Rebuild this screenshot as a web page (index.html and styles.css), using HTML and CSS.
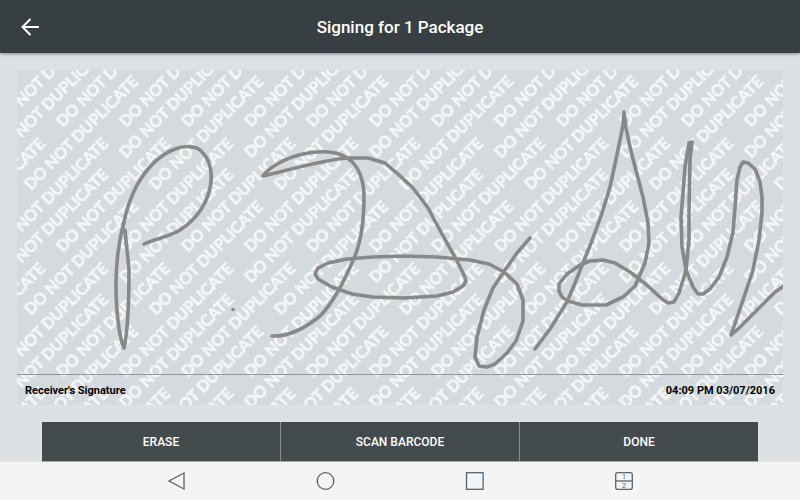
FILE: index.html
```
<!DOCTYPE html>
<html lang="en">
<head>
    <meta charset="UTF-8">
    <meta name="viewport" content="width=device-width, initial-scale=1.0">
    <title>Signing for 1 Package</title>
    <link rel="stylesheet" href="styles.css">
</head>
<body>
    <header class="header">
        <button class="back-btn" aria-label="Back">
            <svg width="18" height="18" viewBox="0 0 18 18">
                <path d="M9.5 1L1.5 9L9.5 17M1.5 9H18"/>
            </svg>
        </button>
        <h1 class="title">Signing for 1 Package</h1>
    </header>

    <main class="main-content">
        <section class="signature-pad">
            <!-- Repeating watermark -->
            <svg class="watermark" aria-hidden="true">
                <defs>
                    <g id="marks">
                        <text transform="translate(14 121) rotate(-45)">DO NOT DUPLICATE</text>
                        <text transform="translate(46 58) rotate(-45)">DO NOT DUPLICATE</text>
                        <text transform="translate(109 58) rotate(-45)">DO NOT DUPLICATE</text>
                        <text transform="translate(109 89) rotate(-45)">DO NOT DUPLICATE</text>
                    </g>
                    <pattern id="tile" width="125" height="125" patternUnits="userSpaceOnUse">
                        <use href="#marks" x="-125" y="0"/>
                        <use href="#marks" x="0" y="0"/>
                        <use href="#marks" x="-125" y="125"/>
                        <use href="#marks" x="0" y="125"/>
                    </pattern>
                </defs>
                <rect width="100%" height="100%" fill="url(#tile)"/>
            </svg>
            <!-- Captured strokes -->
            <svg class="strokes" viewBox="0 0 766 335" role="img" aria-label="Signature">
                <path d="M108 160C109 173 111 188 112 200C112 235 111 260 107 278C103 270 99 245 99 215C99 190 102 170 107 152C110 137 114 127 119 117C131 95 145 84 158 79C168 75 179 76 184 81C192 88 195 100 194 112C192 132 179 150 163 160C152 167 137 169 127 174"/>
                <path d="M216 239.5H216.1"/>
                <path d="M255 266C275 267 292 255 303 246C317 232 330 205 338 186C345 168 347 147 347 127C347 111 342 95 330 88C319 80 300 81 286 84C268 88 251 98 246 106C268 101 305 90 330 88L351 88L368 93L381 104L396 118L411 138L425 164L439 189L447 205L449 211L446 216L436 222L420 226L386 228L356 227L335 224L315 217L301 209L298 204L301 198L311 193L330 189L356 187L386 186L420 187L453 190L472 194L487 202L500 214L506 230L506 251L499 271L490 283L478 294L470 297L462 296L458 287L460 267L467 240L476 218L488 200L500 183L513 168"/>
                <path d="M518 279L533 259L550 232L558 213L566 193L576 168L585 143L593 117L601 80L606 55L607 42L609 58L613 77L617 93L626 127L631 153L632 173L628 193L618 216L606 227L589 235L565 235L551 231L545 227L542 221L542 214L550 204L563 195L573 191L586 190L598 193L613 202L631 216L645 229L651 233L657 232L662 223L666 210L669 200L672 170L672 140L673 90L675 72L672 73L668 97L666 123L664 147L665 177L669 200L676 217L681 224L686 224L693 219L702 207L710 187L716 162L718 137L720 110L723 97L726 92L731 93L738 99L743 112L745 127L745 143L742 170L736 200L726 230L714 265L721 259L743 237L758 222L767 216"/>
            </svg>
            <footer class="pad-footer">
                <span>Receiver's Signature</span>
                <time datetime="2016-03-07T16:09">04:09 PM 03/07/2016</time>
            </footer>
        </section>
        <div class="actions">
            <button class="action-btn">ERASE</button>
            <button class="action-btn">SCAN BARCODE</button>
            <button class="action-btn">DONE</button>
        </div>
    </main>

    <nav class="nav-bar">
        <button class="nav-btn" aria-label="Back"><svg width="20" height="20" viewBox="0 0 20 20"><path d="M17 2V18L2 10Z"/></svg></button>
        <button class="nav-btn" aria-label="Home"><svg width="20" height="20" viewBox="0 0 20 20"><circle cx="9.5" cy="10" r="8.3"/></svg></button>
        <button class="nav-btn" aria-label="Recent apps"><svg width="20" height="20" viewBox="0 0 20 20"><rect x="1.5" y="1.7" width="16.6" height="16.6"/></svg></button>
        <button class="nav-btn" aria-label="Dual window"><svg width="20" height="20" viewBox="0 0 20 20"><rect x="1.7" y="1.7" width="16.6" height="16.6" rx="2"/><path d="M2 10H18"/><text x="10" y="8">1</text><text x="10" y="17">2</text></svg></button>
    </nav>
</body>
</html>
```

FILE: styles.css
```
body {
    font-family: Roboto, Arial, sans-serif;
    margin: 0;
    min-height: 100vh;
    display: flex;
    flex-direction: column;
    background-color: #dde1e4;
    color: #000000;
}
button {
    font-family: inherit;
    border: none;
    padding: 0;
    cursor: pointer;
}
.header {
    display: grid;
    grid-template-columns: 60px 1fr 60px;
    align-items: center;
    height: 53px;
    background-color: #373f42;
    box-shadow: 0 1px 3px rgba(0,0,0,0.4);
}
.back-btn {
    display: flex;
    justify-content: center;
    background: none;
}
.back-btn svg {
    fill: none;
    stroke: #ffffff;
    stroke-width: 2;
}
.title {
    margin: 0;
    font-size: 17px;
    font-weight: 500;
    text-align: center;
    color: #ffffff;
}
.main-content {
    flex: 1;
    display: flex;
    flex-direction: column;
    padding: 17px 17px 0;
}
.signature-pad {
    position: relative;
    flex: 1;
    display: flex;
    flex-direction: column;
    justify-content: flex-end;
    overflow: hidden;
    background-color: #d4dadd;
}
.watermark,
.strokes {
    position: absolute;
    top: 0;
    left: 0;
    width: 100%;
    height: 100%;
}
.watermark text {
    font-family: Lato, sans-serif;
    font-size: 16px;
    font-weight: 700;
    fill: #f3f5f6;
    stroke: #f3f5f6;
    stroke-width: 0.7;
}
.strokes {
    fill: none;
    stroke: #888888;
    stroke-width: 3.6;
    stroke-linecap: round;
    stroke-linejoin: round;
}
.pad-footer {
    position: relative;
    display: flex;
    justify-content: space-between;
    align-items: center;
    height: 30px;
    padding: 0 8px;
    border-top: 1px solid #929698;
    font-size: 11px;
    font-weight: 700;
}
.actions {
    display: flex;
    gap: 1px;
    margin: 17px 25px 0;
    background-color: #8a8f90;
    border-bottom: 1px solid #a3a7a8;
}
.action-btn {
    flex: 1;
    height: 39px;
    background-color: #434b4d;
    color: #ffffff;
    font-size: 12px;
    font-weight: 500;
}
.nav-bar {
    display: flex;
    justify-content: center;
    height: 38px;
    background-color: #f4f4f4;
}
.nav-btn {
    display: flex;
    justify-content: center;
    align-items: center;
    width: 149px;
    background: none;
}
.nav-btn svg {
    fill: none;
    stroke: #546570;
    stroke-width: 1.3;
}
.nav-btn text {
    font-size: 7px;
    text-anchor: middle;
    fill: #546570;
    stroke: none;
}
```
